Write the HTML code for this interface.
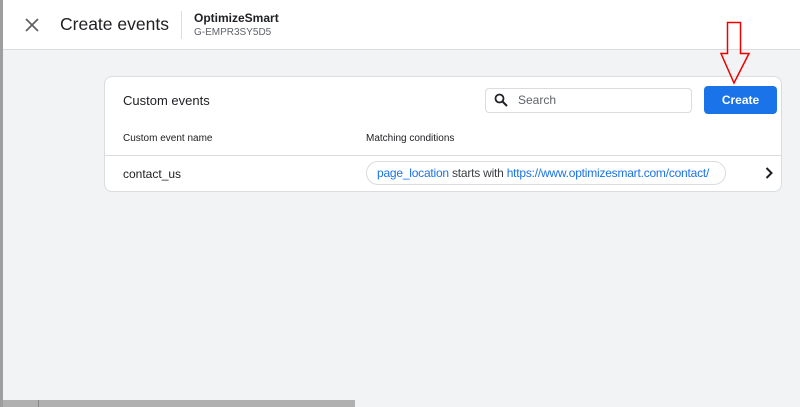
<!DOCTYPE html>
<html><head><style>
body{margin:0;width:800px;height:407px;position:relative;overflow:hidden;background:#f1f3f4;font-family:"Liberation Sans",Arial,sans-serif;}
.top{position:absolute;left:0;top:0;width:800px;height:49px;background:#fff;border-bottom:1px solid #dadce0;}
.card{position:absolute;left:104px;top:76px;width:678px;height:116px;background:#fff;border:1px solid #dadce0;border-radius:8px;box-sizing:border-box;}
.t{position:absolute;white-space:nowrap;}
</style></head><body>
<div class="top">
 <svg class="t" style="left:25px;top:18px" width="14" height="14"><path d="M1 1L13 13M13 1L1 13" stroke="#5f6368" stroke-width="1.8"/></svg>
 <div class="t" style="left:60px;top:14px;font-size:17.5px;color:#202124">Create events</div>
 <div class="t" style="left:181px;top:11px;width:1px;height:28px;background:#dadce0"></div>
 <div class="t" style="left:194px;top:11px;font-size:12px;font-weight:bold;color:#202124">OptimizeSmart</div>
 <div class="t" style="left:194px;top:27px;font-size:10px;color:#5f6368">G-EMPR3SY5D5</div>
</div>
<div style="position:absolute;left:0;top:0;width:3px;height:407px;background:#9e9e9e"></div>
<div class="card">
 <div class="t" style="left:18px;top:16px;font-size:13px;color:#202124">Custom events</div>
 <div class="t" style="left:380px;top:11px;width:205px;height:23px;border:1px solid #dadce0;border-radius:4px;"></div>
 <svg class="t" style="left:389px;top:16px" width="14" height="14"><circle cx="5.5" cy="5.5" r="4" stroke="#202124" stroke-width="1.8" fill="none"/><path d="M8.5 8.5L13 13" stroke="#202124" stroke-width="2"/></svg>
 <div class="t" style="left:413px;top:16px;font-size:12px;color:#5f6368">Search</div>
 <div class="t" style="left:599px;top:9px;width:73px;height:28px;background:#1a73e8;border-radius:4px;color:#fff;font-size:12px;font-weight:bold;text-align:center;line-height:28px">Create</div>
 <div class="t" style="left:18px;top:56px;font-size:10px;color:#202124">Custom event name</div>
 <div class="t" style="left:261px;top:56px;font-size:10px;color:#202124">Matching conditions</div>
 <div class="t" style="left:0;top:78px;width:676px;height:1px;background:#dadce0"></div>
 <div class="t" style="left:18px;top:90px;font-size:12px;color:#202124">contact_us</div>
 <div class="t" style="left:261px;top:84px;height:24px;width:360px;border:1px solid #dadce0;border-radius:12px;box-sizing:border-box;font-size:12px;letter-spacing:-0.22px;line-height:23px;padding-left:10px;color:#3c4043"><span style="color:#1a73e8">page_location</span> starts with <span style="color:#1a73e8">https://www.optimizesmart.com/contact/</span></div>
 <svg class="t" style="left:660px;top:90px" width="8" height="12"><path d="M1.5 1L6.5 6L1.5 11" stroke="#202124" stroke-width="2" fill="none"/></svg>
</div>
<svg class="t" style="left:718px;top:20px" width="34" height="66"><path d="M9.5 2.5H22.5V33.5H31L16 63L3 33.5H9.5Z" fill="none" stroke="#e00" stroke-width="1.5"/></svg>
<div class="t" style="left:3px;top:400px;width:352px;height:7px;background:#b0b0b0"></div>
<div class="t" style="left:38px;top:400px;width:1px;height:7px;background:#888"></div>
</body></html>
